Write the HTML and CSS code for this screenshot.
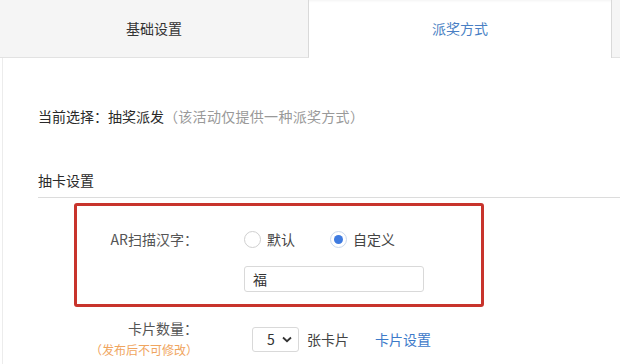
FILE: index.html
```html
<!DOCTYPE html>
<html lang="zh-CN">

<head>
    <meta charset="UTF-8">
    <title>派奖方式</title>
    <link rel="stylesheet" href="styles.css">
</head>

<body>
    <div class="tabs">
        <div class="tab">基础设置</div>
        <div class="tab tab-active">派奖方式</div>
        <div class="tab tab-rest"></div>
    </div>

    <div class="content">
        <div class="current">当前选择：抽奖派发<span class="hint">（该活动仅提供一种派奖方式）</span></div>
        <div class="section-title">抽卡设置</div>

        <div class="highlight">
            <div class="form-row">
                <div class="label">AR扫描汉字：</div>
                <div class="control">
                    <label class="radio"><span class="dot"></span>默认</label>
                    <label class="radio checked"><span class="dot"></span>自定义</label>
                </div>
            </div>
            <div class="form-row">
                <div class="label"></div>
                <div class="control">
                    <input class="text-input" type="text" value="福">
                </div>
            </div>
        </div>

        <div class="form-row card-row">
            <div class="label">
                <div>卡片数量：</div>
                <div class="warn">（发布后不可修改）</div>
            </div>
            <div class="control">
                <div class="select">5 <svg width="10" height="7" viewBox="0 0 10 7"><path d="M1 1.5 L5 5.2 L9 1.5" fill="none" stroke="#333" stroke-width="1.8"/></svg></div>
                <span class="unit">张卡片</span>
                <a class="link" href="#">卡片设置</a>
            </div>
        </div>
    </div>
</body>

</html>
```

FILE: styles.css
```css
body {
    margin: 0;
    background: #fff;
    color: #333;
    font-family: "Microsoft YaHei", "Noto Sans CJK SC", sans-serif;
    font-size: 14px;
}
.tabs {
    display: flex;
    height: 58px;
}
.tab {
    width: 308px;
    height: 57px;
    line-height: 57px;
    text-align: center;
    background: #f5f5f5;
    border-right: 1px solid #d9d9d9;
    border-bottom: 1px solid #e2e2e2;
    color: #333;
}
.tab-active {
    width: 302px;
    height: 58px;
    background: #fff;
    border-right: 1px solid #d9d9d9;
    border-bottom: none;
    color: #4a7fc4;
    box-shadow: inset 0 3px 3px -2px rgba(0, 0, 0, 0.05);
}
.tab-rest {
    flex: 1;
    border-right: none;
}

.content {
    margin-left: 2px;
    border-left: 1px solid #ececec;
    padding: 48px 0 0 35px;
    height: 258px;
}
.current {
    line-height: 20px;
    color: #2a2a2a;
}
.hint {
    color: #999;
    letter-spacing: 0.3px;
}
.section-title {
    margin-top: 44px;
    line-height: 20px;
    padding-bottom: 7px;
    border-bottom: 1px solid #dcdcdc;
    color: #2a2a2a;
}

.highlight {
    margin: 5px 0 0 36px;
    width: 410px;
    height: 104px;
    box-sizing: border-box;
    border: 3px solid #c8342c;
    border-radius: 3px;
    padding-top: 23px;
}
.form-row {
    display: flex;
    align-items: center;
}
.label {
    width: 121px;
    text-align: right;
    color: #555;
    line-height: 20px;
    flex-shrink: 0;
}
.control {
    display: flex;
    align-items: center;
    margin-left: 46px;
}
.highlight .form-row + .form-row {
    margin-top: 17px;
}
.radio {
    display: flex;
    align-items: center;
    margin-right: 35px;
    color: #444;
    line-height: 20px;
}
.dot {
    width: 15px;
    height: 15px;
    border: 1px solid #d0d0d0;
    border-radius: 50%;
    margin-right: 6px;
    background: #fff;
    box-sizing: content-box;
    position: relative;
}
.radio.checked .dot {
    border-color: #c9d8ee;
}
.radio.checked .dot::after {
    content: "";
    position: absolute;
    left: 3px;
    top: 3px;
    width: 9px;
    height: 9px;
    border-radius: 50%;
    background: #3f7be0;
}
.text-input {
    width: 180px;
    height: 26px;
    box-sizing: border-box;
    border: 1px solid #d9d9d9;
    border-radius: 3px;
    padding: 0 8px;
    font-family: inherit;
    font-size: 14px;
    color: #333;
    outline: none;
}

.card-row {
    margin: 10px 0 0 36px;
}
.card-row .label {
    width: 124px;
    line-height: 22px;
}
.warn {
    color: #f0a55e;
    font-size: 12px;
}
.card-row .control {
    margin-left: 54px;
}
.select {
    display: flex;
    align-items: center;
    justify-content: space-between;
    width: 47px;
    height: 25px;
    box-sizing: border-box;
    padding: 0 6px 0 14px;
    border: 1px solid #d9d9d9;
    border-radius: 3px;
    color: #333;
}
.unit {
    margin-left: 8px;
    color: #444;
}
.link {
    margin-left: 26px;
    color: #3d7ac9;
    text-decoration: none;
}
```
